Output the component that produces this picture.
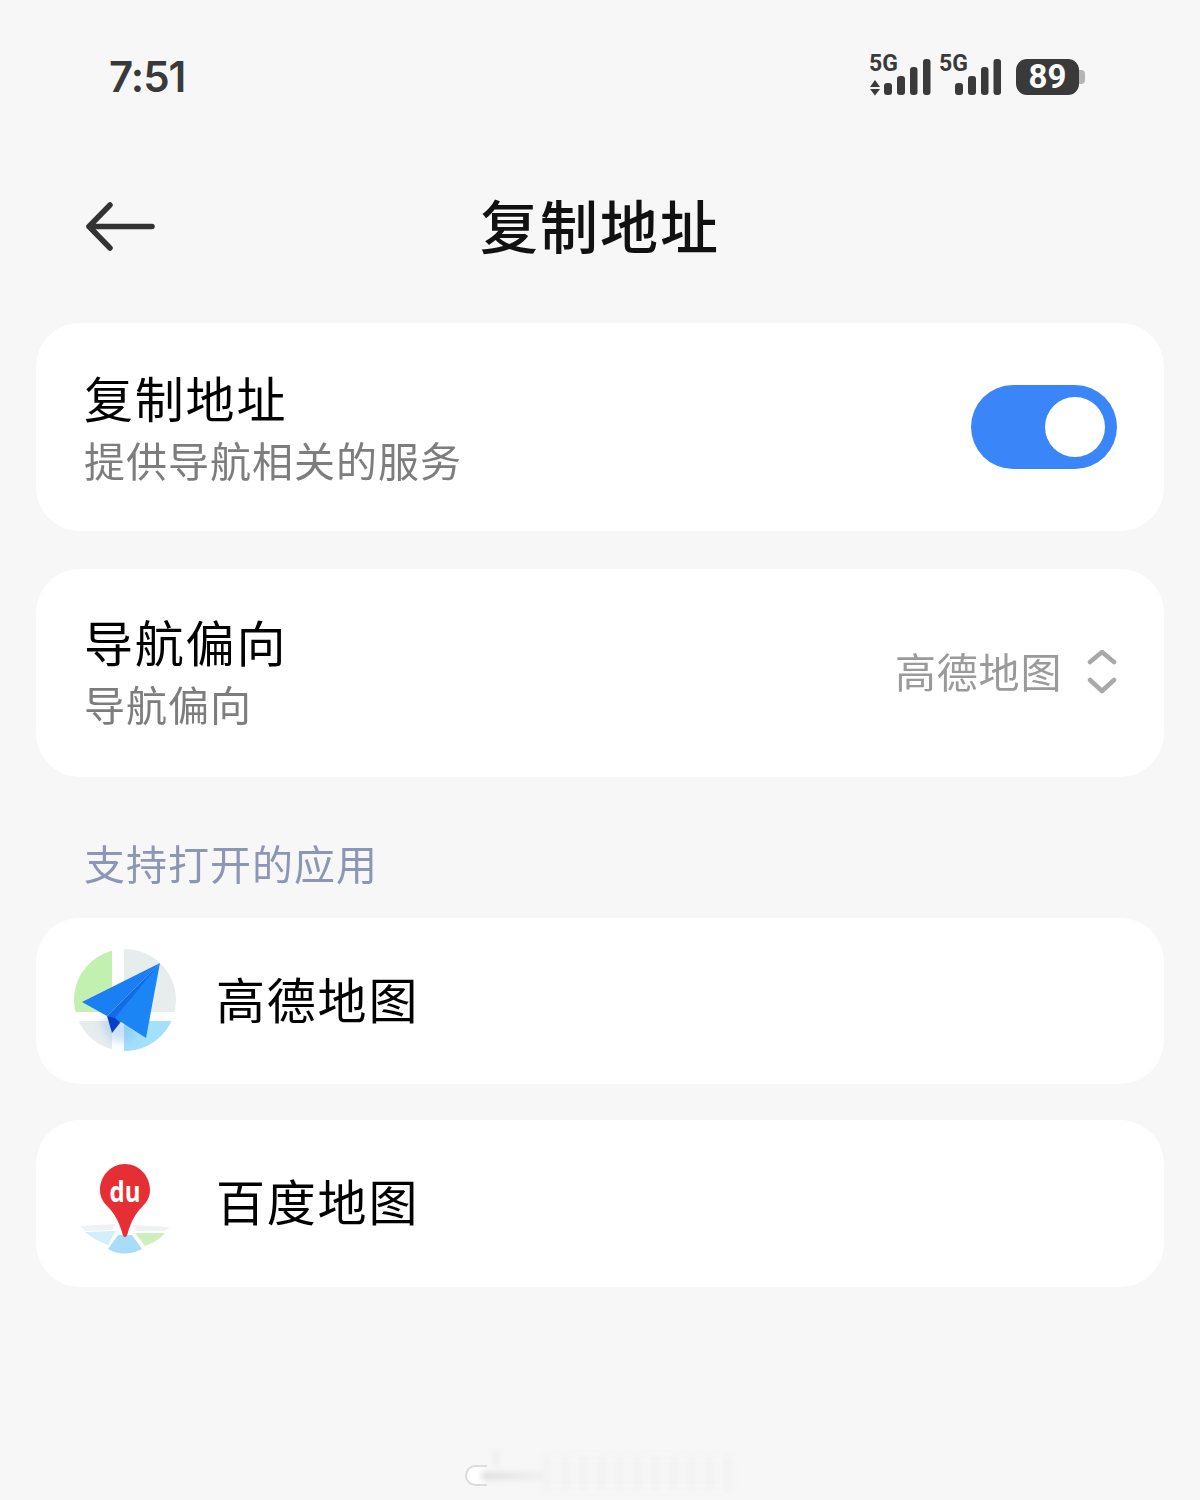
<div class="page">
  <header class="status">
    <span class="time">7:51</span>
    <div class="indicators">
      <div class="sig">
        <span class="five">5G</span>
        <svg width="63" height="37" viewBox="0 0 63 37">
          <path d="M1 28 6 21 11 28ZM1 30 6 36.5 11 30Z" fill="#3a3a3a"/>
          <rect x="15" y="24" width="8" height="12" rx="3" fill="#3a3a3a"/>
          <rect x="28" y="17" width="8" height="19" rx="3" fill="#3a3a3a"/>
          <rect x="41" y="8" width="7.5" height="28" rx="3" fill="#3a3a3a"/>
          <rect x="54" y="0" width="7.5" height="36" rx="3" fill="#3a3a3a"/>
        </svg>
      </div>
      <div class="sig second">
        <span class="five">5G</span>
        <svg width="62" height="37" viewBox="0 0 62 37">
          <rect x="16" y="24" width="8" height="12" rx="3" fill="#3a3a3a"/>
          <rect x="29" y="17" width="8" height="19" rx="3" fill="#3a3a3a"/>
          <rect x="42" y="8" width="7.5" height="28" rx="3" fill="#3a3a3a"/>
          <rect x="54.5" y="0" width="7.5" height="36" rx="3" fill="#3a3a3a"/>
        </svg>
      </div>
      <div class="battery"><span class="level">89</span><i class="cap"></i></div>
    </div>
  </header>

  <nav class="title">
    <svg class="back" width="72" height="52" viewBox="0 0 72 52" fill="none" stroke="#333" stroke-width="5.5" stroke-linecap="round" stroke-linejoin="round">
      <path d="M5 25.5H68M26 4 5 25.5 26 47"/>
    </svg>
    <h1 class="gray">复制地址</h1>
  </nav>

  <section class="card setting">
    <div class="texts gray">
      <div class="name">复制地址</div>
      <div class="desc">提供导航相关的服务</div>
    </div>
    <div class="toggle"><i class="knob"></i></div>
  </section>

  <section class="card setting">
    <div class="texts gray">
      <div class="name up">导航偏向</div>
      <div class="desc">导航偏向</div>
    </div>
    <div class="picker">
      <span class="gray">高德地图</span>
      <svg width="32" height="48" viewBox="0 0 32 48" fill="none" stroke="#a8a8a8" stroke-width="4.5" stroke-linecap="round" stroke-linejoin="round">
        <path d="M5 13 17 3 29 13M5 31 17 42 29 31"/>
      </svg>
    </div>
  </section>

  <div class="group gray">支持打开的应用</div>

  <section class="card app">
    <svg class="icon" width="104" height="104" viewBox="0 0 104 104">
      <defs>
        <clipPath id="disc"><circle cx="51" cy="51" r="51"/></clipPath>
        <filter id="soft" x="-40%" y="-40%" width="180%" height="180%"><feGaussianBlur stdDeviation="5"/></filter>
      </defs>
      <g clip-path="url(#disc)">
        <rect x="0" y="0" width="38" height="63" fill="#c2f0b0"/>
        <rect x="50" y="0" width="54" height="63" fill="#e7eded"/>
        <rect x="0" y="72" width="38" height="32" fill="#e7eded"/>
        <rect x="50" y="72" width="54" height="32" fill="#a3e0fb"/>
        <path d="M24 70 60 70 60 92 38 92Z" fill="#7cb4f5" opacity=".4" filter="url(#soft)"/>
      </g>
      <path d="M8 53 86 14 33 67Z" fill="#1a7ff4"/>
      <path d="M86 14 33 67 46 74Z" fill="#126ce8"/>
      <path d="M86 14 72 89 41 69Z" fill="#1b85f5"/>
      <path d="M33 67 38 84 46 74 41 69Z" fill="#0b3ec8"/>
    </svg>
    <span class="app-name gray">高德地图</span>
  </section>

  <section class="card app">
    <svg class="icon" width="104" height="104" viewBox="0 0 104 104">
      <path d="M6 75 42 73 38 79 12 80Z" fill="#eef2f2"/>
      <path d="M11 81 42 80 34 94C26 91 18 87 11 81Z" fill="#d3effb"/>
      <path d="M44 84H58L68 98C56 104 44 104 34 98Z" fill="#a9dcf8"/>
      <path d="M61 82H91C86 88 79 92 71 95Z" fill="#cfeebd"/>
      <path d="M59 74 96 76 90 80 62 80Z" fill="#eef2f2"/>
      <path d="M51 13C37 13 26 25 26 39 26 46 29 51 34 56 40 62 45 70 48.5 83 49.5 87 52.5 87 53.5 83 57 70 62 62 68 56 73 51 76 46 76 39 76 25 65 13 51 13Z" fill="#e52f35"/>
      <text class="du" x="51" y="51" text-anchor="middle" textLength="31" lengthAdjust="spacingAndGlyphs">du</text>
    </svg>
    <span class="app-name gray">百度地图</span>
  </section>

  <div class="watermark" aria-hidden="true">
    <i class="smear"></i><i class="ring"></i><i class="stem"></i><i class="ghost"></i>
  </div>
</div>

<style>
  :global(body) { margin: 0; background: #f7f7f7; }
  .page {
    position: relative;
    width: 1200px;
    height: 1500px;
    overflow: hidden;
    box-sizing: border-box;
    padding: 0 36px;
    background: #f7f7f7;
    font-family: "Noto Sans CJK SC", "Noto Sans", sans-serif;
    color: #000;
  }
  .gray { will-change: transform; }
  .status {
    height: 155px;
    box-sizing: border-box;
    padding: 52px 85px 0 73px;
    display: flex;
    justify-content: space-between;
    align-items: flex-start;
  }
  .time {
    font-family: Inter, Roboto, sans-serif;
    font-weight: 600;
    font-size: 42px;
    line-height: 50px;
    color: #3a3a3a;
    letter-spacing: -1px;
  }
  .indicators { display: flex; align-items: flex-start; margin-top: 3px; }
  .sig { position: relative; width: 63px; height: 41px; padding-top: 4px; box-sizing: border-box; }
  .sig.second { width: 62px; margin-left: 7px; }
  .five {
    position: absolute;
    left: 0;
    top: -4px;
    font-family: Roboto, Inter, sans-serif;
    font-weight: 700;
    font-size: 23px;
    line-height: 26px;
    color: #3a3a3a;
  }
  .sig svg { display: block; }
  .battery {
    position: relative;
    width: 63px;
    height: 36px;
    margin: 4px 0 0 15px;
    background: #3a3a3a;
    border-radius: 11px;
    display: flex;
    align-items: center;
    justify-content: center;
  }
  .level {
    font-family: Roboto, Inter, sans-serif;
    font-weight: 700;
    font-size: 33px;
    line-height: 36px;
    color: #fff;
  }
  .cap {
    position: absolute;
    right: -6px;
    top: 11px;
    width: 6px;
    height: 14px;
    background: #b4b4b4;
    border-radius: 0 4px 4px 0;
  }
  .title {
    position: relative;
    height: 168px;
    display: flex;
    align-items: flex-start;
    justify-content: center;
  }
  .back { position: absolute; left: 48px; top: 46px; }
  h1 {
    margin: 31px 0 0;
    font-weight: 500;
    font-size: 58px;
    line-height: 76px;
    letter-spacing: 2px;
    color: #111;
  }
  .card {
    background: #fff;
    border-radius: 44px;
    width: 1128px;
    box-sizing: border-box;
  }
  .setting {
    height: 208px;
    margin-bottom: 37.5px;
    padding: 0 47px 0 48px;
    display: flex;
    align-items: center;
    justify-content: space-between;
  }
  .name {
    font-size: 49px;
    line-height: 60px;
    letter-spacing: 1.8px;
    color: #000;
  }
  .name.up { margin-top: -2px; margin-bottom: 2px; }
  .desc {
    margin-top: 3px;
    font-size: 41px;
    line-height: 58px;
    letter-spacing: 1px;
    color: #7d7d7d;
  }
  .toggle {
    width: 146px;
    height: 84px;
    border-radius: 42px;
    background: #3a86f9;
    position: relative;
  }
  .knob {
    position: absolute;
    right: 12px;
    top: 12px;
    width: 60px;
    height: 60px;
    border-radius: 50%;
    background: #fff;
  }
  .picker {
    display: flex;
    align-items: center;
    gap: 23px;
    color: #9a9a9a;
    font-size: 41px;
    line-height: 58px;
    letter-spacing: 0.8px;
  }
  .picker span { margin-bottom: 6px; }
  .group {
    margin: 55px 0 0 48px;
    height: 86px;
    font-size: 41px;
    line-height: 60px;
    letter-spacing: 1px;
    color: #8d96b4;
  }
  .app {
    height: 166.5px;
    margin-bottom: 36px;
    padding-left: 38px;
    display: flex;
    align-items: center;
    gap: 38px;
  }
  .icon { flex: none; overflow: visible; }
  .du {
    font-family: "Open Sans", Roboto, sans-serif;
    font-weight: 700;
    font-size: 29px;
    fill: #fff;
  }
  .app-name {
    margin-bottom: 6px;
    font-size: 49px;
    line-height: 60px;
    letter-spacing: 1.8px;
  }
  .watermark {
    position: absolute;
    left: 464px;
    top: 1450px;
    width: 270px;
    height: 50px;
  }
  .ring {
    position: absolute;
    left: 1px;
    top: 15px;
    width: 22px;
    height: 21px;
    box-sizing: border-box;
    border: 2px solid #dcdcdc;
    border-right: none;
    border-radius: 11px 0 0 11px;
    background: linear-gradient(90deg, #fff 50%, rgba(255,255,255,0));
  }
  .smear {
    position: absolute;
    left: 6px;
    top: 22px;
    width: 75px;
    height: 8px;
    background: linear-gradient(90deg, #dcdcdc, #f1f1f1);
    filter: blur(2.5px);
  }
  .stem {
    position: absolute;
    left: 29px;
    top: 1px;
    width: 6px;
    height: 14px;
    background: #ededed;
    filter: blur(2px);
  }
  .ghost {
    position: absolute;
    left: 80px;
    top: 6px;
    width: 188px;
    height: 34px;
    background: repeating-linear-gradient(90deg, #f1f1f1 0 7px, #f7f7f7 7px 18px);
    filter: blur(3.5px);
  }
</style>
